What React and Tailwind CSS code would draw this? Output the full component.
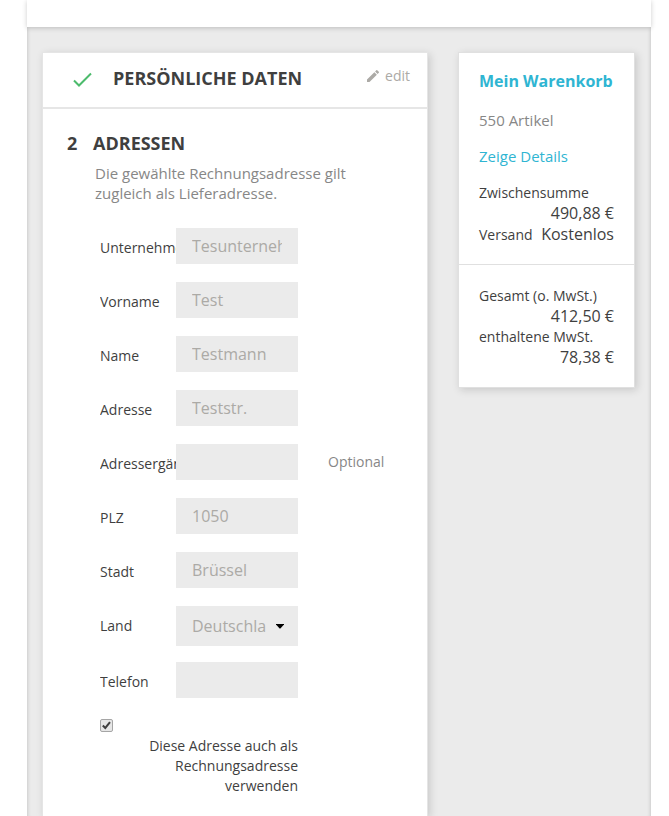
const fields = [
  { id: "company", label: "Unternehmen", value: "Tesunternehmen" },
  { id: "firstname", label: "Vorname", value: "Test" },
  { id: "lastname", label: "Name", value: "Testmann" },
  { id: "address1", label: "Adresse", value: "Teststr." },
  { id: "address2", label: "Adressergänzung", value: "", hint: "Optional" },
  { id: "postcode", label: "PLZ", value: "1050" },
  { id: "city", label: "Stadt", value: "Brüssel" },
  { id: "country", label: "Land", options: ["Deutschland", "Belgien"] },
  { id: "phone", label: "Telefon", value: "" },
];

function Field({ id, label, value, hint, options }) {
  return (
    <div className={options ? "flex h-14 items-start" : "flex h-[54px] items-start"}>
      <label htmlFor={id} className="w-[76px] shrink-0 overflow-hidden pt-[10px] text-sm whitespace-nowrap">
        {label}
      </label>
      {options ? (
        <div className="relative h-10 min-w-0 flex-1">
          <select
            id={id}
            className="h-10 w-full appearance-none overflow-hidden bg-[#ebebeb] pr-8 pl-4 text-base text-clip text-[#acaaa6]"
          >
            {options.map((option) => (
              <option key={option}>{option}</option>
            ))}
          </select>
          <svg viewBox="0 0 8 5" className="pointer-events-none absolute top-[18px] right-[14px] h-[5px] w-2 fill-black">
            <path d="M0 0h8v.6L4.4 4.4h-.8L0 .6z" />
          </svg>
        </div>
      ) : (
        <input
          id={id}
          type="text"
          defaultValue={value}
          className="h-9 min-w-0 flex-1 bg-[#ebebeb] px-4 text-base text-[#acaaa6]"
        />
      )}
      <span className="w-[129px] shrink-0 pt-2 pl-[30px] text-sm text-[#878787]">{hint}</span>
    </div>
  );
}

function Amount({ label, value }) {
  return (
    <div className="flex flex-wrap items-baseline justify-between">
      <dt className="text-sm leading-5">{label}</dt>
      <dd className="ml-auto text-base leading-[21px]">{value}</dd>
    </div>
  );
}

export default function App() {
  return (
    <div className="flex min-h-screen flex-col bg-white pr-[18px] pl-[27px] font-['Open_Sans',sans-serif] text-[#3f3f3f]">
      <header className="relative z-10 h-[27px] bg-white shadow-[0_1px_5px_rgba(0,0,0,0.2)]" />
      <main className="flex flex-1 items-start gap-[30px] bg-[#ebebeb] pt-[25px] pr-4 pl-[15px] shadow-[inset_4px_0_4px_-4px_rgba(0,0,0,0.2),inset_-4px_0_4px_-4px_rgba(0,0,0,0.2)]">
        <div className="min-w-0 flex-1 self-stretch border border-b-0 border-[#e5e5e5] bg-white shadow-[2px_2px_8px_rgba(0,0,0,0.15)]">
          <section className="flex h-14 items-start border-b-2 border-[#e6e6e6] pr-[17px] pl-[30px]">
            <svg viewBox="0 0 20 16" className="mt-[19px] h-4 w-5 fill-none stroke-[#4cbb6c] stroke-2">
              <path d="M1 8.5L6 13.5L18 1.5" />
            </svg>
            <h1 className="flex-1 pt-[13px] pl-5 text-lg leading-6 font-bold whitespace-nowrap">
              PERSÖNLICHE DATEN
            </h1>
            <button type="button" className="flex items-center gap-1 pt-[13px] text-sm leading-5 text-[#acaaa6]">
              <svg viewBox="0 0 24 24" className="h-4 w-4 fill-current">
                <path d="M3 17.25V21h3.75L17.81 9.94l-3.75-3.75L3 17.25zM20.71 7.04a1 1 0 0 0 0-1.41l-2.34-2.34a1 1 0 0 0-1.41 0l-1.83 1.83 3.75 3.75 1.83-1.83z" />
              </svg>
              edit
            </button>
          </section>

          <section className="pt-[22px]">
            <h2 className="flex pl-6 text-lg leading-6 font-bold">
              <span className="w-[26px]">2</span>ADRESSEN
            </h2>
            <p className="pt-2 pr-[68px] pl-[52px] text-[15px] leading-5 text-[#878787]">
              Die gewählte Rechnungsadresse gilt zugleich als Lieferadresse.
            </p>
            <form className="pt-[25px] pl-[57px]">
              {fields.map((field) => (
                <Field key={field.id} {...field} />
              ))}
              <div className="pt-[3px] pr-[129px] pb-5">
                <span className="relative block h-[13px] w-[13px]">
                  <input
                    id="same-address"
                    type="checkbox"
                    defaultChecked
                    className="peer block h-[13px] w-[13px] appearance-none rounded-[2px] border border-[#a5a5a5] bg-[#e6e6e6]"
                  />
                  <svg
                    viewBox="0 0 13 13"
                    className="pointer-events-none absolute inset-0 hidden h-[13px] w-[13px] fill-none stroke-[#3f3f3f] stroke-2 peer-checked:block"
                  >
                    <path d="M2.8 6.5L5.3 9L10 3.2" />
                  </svg>
                </span>
                <label htmlFor="same-address" className="block pt-1 pl-10 text-right text-sm leading-5">
                  Diese Adresse auch als Rechnungsadresse verwenden
                </label>
              </div>
            </form>
          </section>
        </div>

        <aside className="w-[177px] shrink-0 border border-[#e0e0e0] bg-white shadow-[2px_2px_8px_rgba(0,0,0,0.15)]">
          <div className="border-b border-[#e0e0e0] px-5 pt-[18px] pb-[19px]">
            <h2 className="text-base leading-5 font-bold whitespace-nowrap text-[#2fb5d2]">Mein Warenkorb</h2>
            <p className="pt-[19px] text-[15px] leading-5 text-[#878787]">550 Artikel</p>
            <p className="pt-4 pb-[17px] text-[15px] leading-5">
              <a href="#details" className="text-[#2fb5d2]">Zeige Details</a>
            </p>
            <dl>
              <Amount label="Zwischensumme" value="490,88 €" />
              <Amount label="Versand" value="Kostenlos" />
            </dl>
          </div>
          <dl className="px-5 pt-[21px] pb-[19px]">
            <Amount label="Gesamt (o. MwSt.)" value="412,50 €" />
            <Amount label="enthaltene MwSt." value="78,38 €" />
          </dl>
        </aside>
      </main>
    </div>
  );
}
